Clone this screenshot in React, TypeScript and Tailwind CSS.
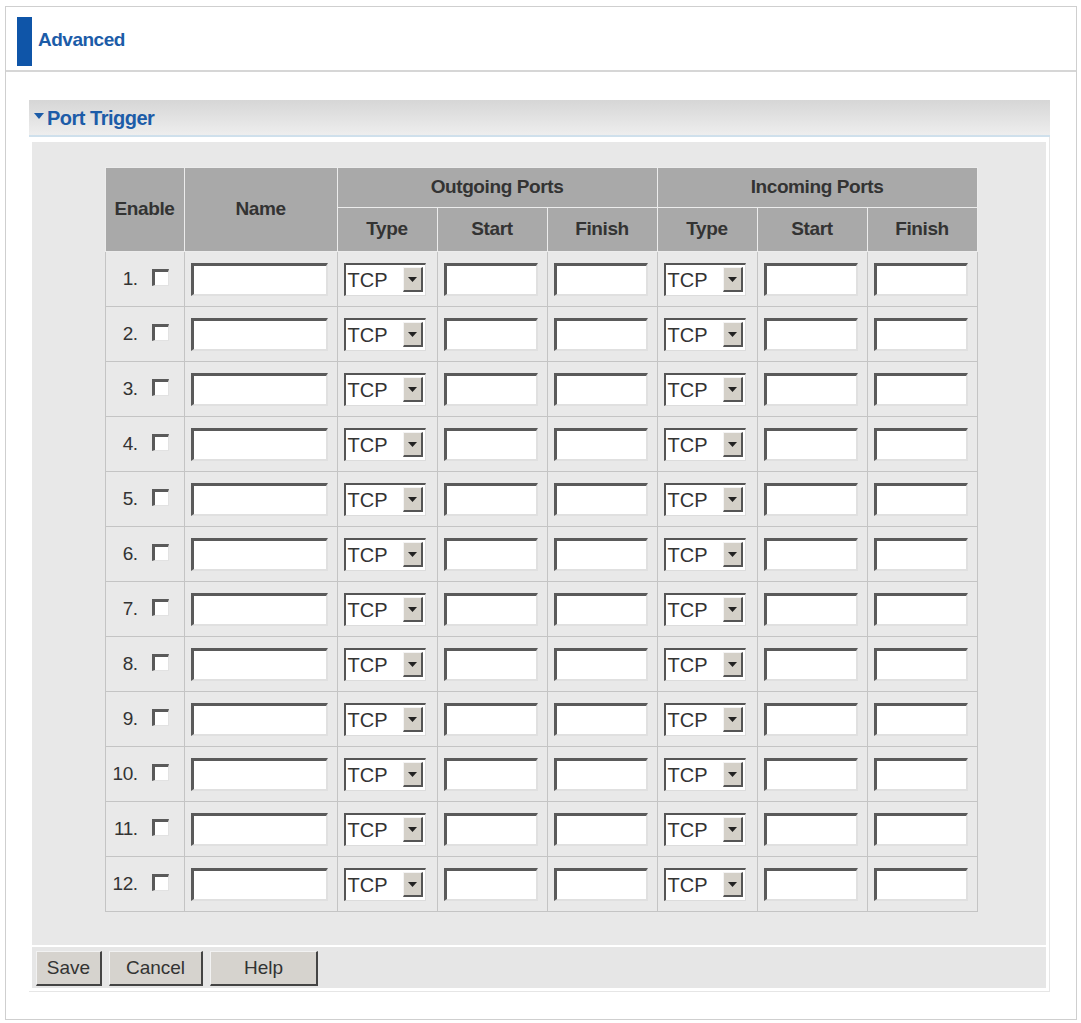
import React from "react";

const font = { fontFamily: '"Liberation Sans", Arial, sans-serif' };

function TextBox({ w }: { w: string }) {
  return (
    <div
      className={`${w} h-[33px] bg-white border-t-[3px] border-l-[3px] border-b-2 border-r-2 border-t-[#5a5a5a] border-l-[#5a5a5a] border-b-[#e0e0e0] border-r-[#e0e0e0]`}
    />
  );
}

function TypeSelect() {
  return (
    <div className="w-[82px] h-[33px] bg-white flex items-center border-t-2 border-l-2 border-b border-r border-t-[#555] border-l-[#555] border-b-[#dcdcdc] border-r-[#dcdcdc]">
      <span className="pl-[2px] text-[20px] text-[#333] leading-none flex-1">TCP</span>
      <div className="w-[20px] h-[25px] mr-[2px] bg-[#d4d0c8] flex items-center justify-center border-r-2 border-b-2 border-r-[#555] border-b-[#555] border-t border-l border-t-[#f4f4f4] border-l-[#f4f4f4]">
        <svg width="9" height="5" viewBox="0 0 9 5">
          <path d="M0 0h9L4.5 5z" fill="#222" />
        </svg>
      </div>
    </div>
  );
}

function CheckBox() {
  return (
    <div className="w-[17px] h-[17px] mb-[4px] bg-white border-t-[3px] border-l-[3px] border-b border-r border-t-[#5a5a5a] border-l-[#5a5a5a] border-b-[#e2e2e2] border-r-[#e2e2e2]" />
  );
}

function Button({ label, w }: { label: string; w: string }) {
  return (
    <button
      className={`${w} h-[35px] bg-[#d6d3ce] text-[19px] text-[#333] border-t border-l border-t-[#f2f2f2] border-l-[#f2f2f2] border-r-2 border-b-2 border-r-[#444] border-b-[#444]`}
    >
      {label}
    </button>
  );
}

const th = "bg-[#a9a9a9] border border-[#ececec] font-bold text-[19px] text-[#333] tracking-[-0.4px]";
const td = "border border-[#c4c4c4] bg-[#e9e9e9] px-[6px]";

export default function App() {
  const rows = Array.from({ length: 12 }, (_, i) => i + 1);

  return (
    <div style={font} className="w-[1081px] h-[1023px] bg-white pt-[6px] pl-[5px]">
      <div className="w-[1072px] h-[1014px] border border-[#cfcfcf] flex flex-col">
        {/* page title */}
        <div className="h-[65px] border-b-2 border-[#d6d6d6] flex items-end pl-[11px] pb-[4px]">
          <div className="w-[15px] h-[49px] bg-[#0f55a8]" />
          <span className="ml-[6px] mb-[12px] text-[19px] font-bold text-[#1c5ca8] tracking-[-0.5px]">
            Advanced
          </span>
        </div>

        <div className="pl-[23px] pr-[26px] pt-[28px]">
          {/* section header */}
          <div className="h-[37px] bg-gradient-to-b from-[#d6d6d6] to-[#eeeeee] border-b-2 border-[#cfe0ec] flex items-center pl-[5px]">
            <svg width="10" height="6" viewBox="0 0 10 6" className="mr-[3px] mb-[4px]">
              <path d="M0 0h10L5 6z" fill="#1c5ca8" />
            </svg>
            <span className="text-[20px] font-bold text-[#1c5ca8] tracking-[-0.5px]">Port Trigger</span>
          </div>

          <div className="bg-white p-[3px] pt-[5px] border-r border-b border-[#e6e6e6]">
            <div className="bg-[#e8e8e8] pt-[25px] pb-[33px] pl-[4px] flex justify-center">
              <table className="border-collapse border border-[#8e8e8e]">
                <colgroup>
                  <col className="w-[79px]" />
                  <col className="w-[153px]" />
                  <col className="w-[100px]" />
                  <col className="w-[110px]" />
                  <col className="w-[110px]" />
                  <col className="w-[100px]" />
                  <col className="w-[110px]" />
                  <col className="w-[110px]" />
                </colgroup>
                <thead>
                  <tr className="h-[40px]">
                    <th rowSpan={2} className={th}>Enable</th>
                    <th rowSpan={2} className={th}>Name</th>
                    <th colSpan={3} className={th}>Outgoing Ports</th>
                    <th colSpan={3} className={th}>Incoming Ports</th>
                  </tr>
                  <tr className="h-[44px]">
                    <th className={th}>Type</th>
                    <th className={th}>Start</th>
                    <th className={th}>Finish</th>
                    <th className={th}>Type</th>
                    <th className={th}>Start</th>
                    <th className={th}>Finish</th>
                  </tr>
                </thead>
                <tbody>
                  {rows.map((n) => (
                    <tr key={n} className="h-[55px]">
                      <td className={`${td} text-right`}>
                        <div className="flex items-center justify-end gap-[14px] pr-[9px]">
                          <span className="text-[19px] text-[#333] tracking-[-0.5px]">{n}.</span>
                          <CheckBox />
                        </div>
                      </td>
                      <td className={td}>
                        <TextBox w="w-[137px]" />
                      </td>
                      <td className={td}>
                        <TypeSelect />
                      </td>
                      <td className={td}>
                        <TextBox w="w-[94px]" />
                      </td>
                      <td className={td}>
                        <TextBox w="w-[94px]" />
                      </td>
                      <td className={td}>
                        <TypeSelect />
                      </td>
                      <td className={td}>
                        <TextBox w="w-[94px]" />
                      </td>
                      <td className={td}>
                        <TextBox w="w-[94px]" />
                      </td>
                    </tr>
                  ))}
                </tbody>
              </table>
            </div>
            <div className="mt-[2px] bg-[#e6e6e6] h-[41px] flex items-center gap-[7px] pl-[4px] pt-[2px]">
              <Button label="Save" w="w-[66px]" />
              <Button label="Cancel" w="w-[94px]" />
              <Button label="Help" w="w-[108px]" />
            </div>
          </div>
        </div>
      </div>
    </div>
  );
}
